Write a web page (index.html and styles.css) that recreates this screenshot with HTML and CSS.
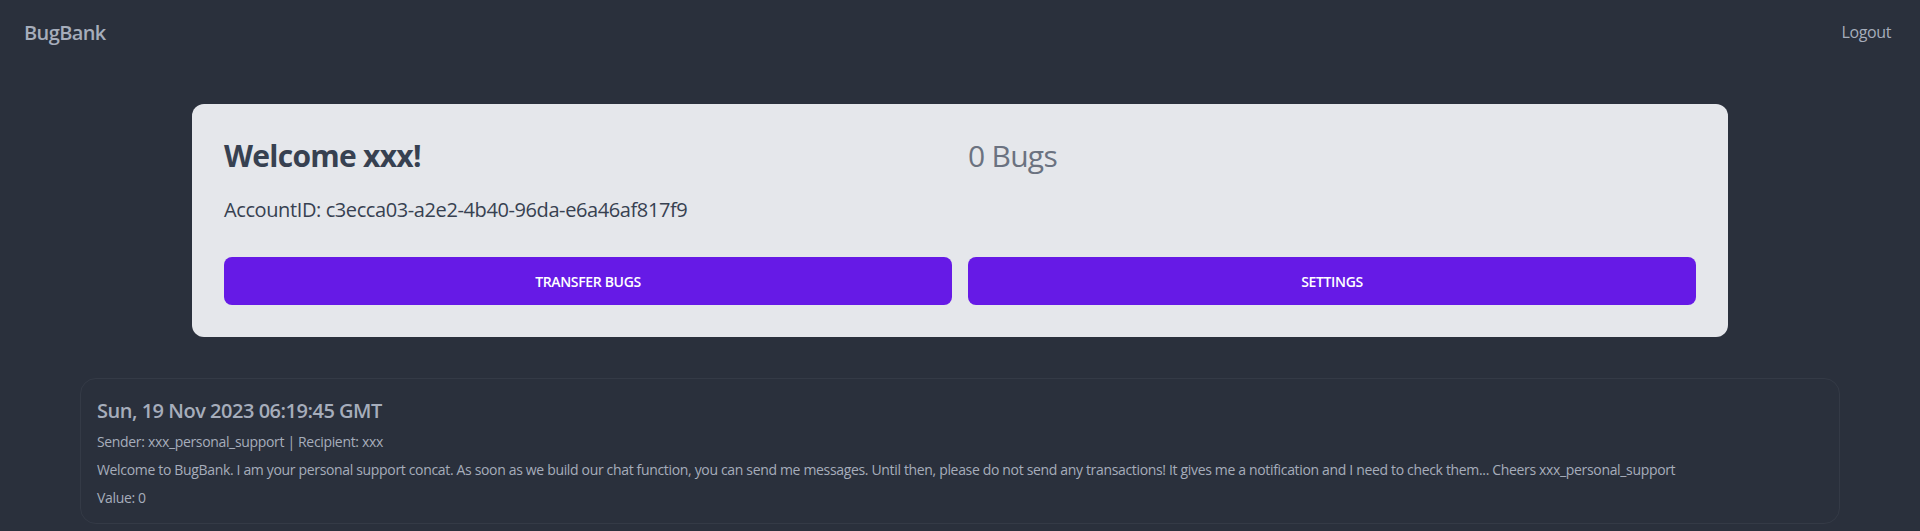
FILE: index.html
```html
<!DOCTYPE html>
<html lang="en">
<head>
<meta charset="utf-8">
<title>BugBank</title>
<link rel="stylesheet" href="styles.css">
</head>
<body>
<nav class="navbar">
  <a class="brand" href="#">BugBank</a>
  <a class="logout" href="#">Logout</a>
</nav>
<main>
  <section class="account-card">
    <div class="account-grid">
      <h1 class="welcome">Welcome xxx!</h1>
      <div class="balance">0 Bugs</div>
      <p class="account-id">AccountID: c3ecca03-a2e2-4b40-96da-e6a46af817f9</p>
    </div>
    <div class="actions">
      <button class="btn" type="button">Transfer Bugs</button>
      <button class="btn" type="button">Settings</button>
    </div>
  </section>
  <section class="messages">
    <article class="message">
      <h2 class="message-date">Sun, 19 Nov 2023 06:19:45 GMT</h2>
      <p class="message-line">Sender: xxx_personal_support | Recipient: xxx</p>
      <p class="message-line">Welcome to BugBank. I am your personal support concat. As soon as we build our chat function, you can send me messages. Until then, please do not send any transactions! It gives me a notification and I need to check them... Cheers xxx_personal_support</p>
      <p class="message-line">Value: 0</p>
    </article>
  </section>
</main>
</body>
</html>
```
FILE: styles.css
```css
* {
  box-sizing: border-box;
}

html, body {
  margin: 0;
  padding: 0;
}

body {
  background: #2a303c;
  font-family: "Open Sans", "Noto Sans", sans-serif;
  color: #a6adbb;
}

a {
  text-decoration: none;
  color: inherit;
}

.navbar {
  display: flex;
  align-items: center;
  justify-content: space-between;
  min-height: 64px;
  padding: 8px;
}

.brand {
  display: flex;
  align-items: center;
  height: 48px;
  padding: 0 16px;
  font-size: 20px;
  font-weight: 600;
  letter-spacing: -0.03em;
  color: #a6adbb;
}

.logout {
  display: flex;
  align-items: center;
  height: 48px;
  padding: 0 21px 0 16px;
  font-size: 16px;
  letter-spacing: -0.024em;
  color: #a6adbb;
}

.account-card {
  width: 1536px;
  margin: 40px auto 0;
  padding: 34px 32px 32px;
  background: #e5e7eb;
  border-radius: 12px;
}

.account-grid {
  display: grid;
  grid-template-columns: 1fr 1fr;
  column-gap: 16px;
}

.welcome {
  margin: 0;
  font-size: 30px;
  line-height: 36px;
  font-weight: 700;
  letter-spacing: -0.024em;
  color: #374151;
}

.balance {
  font-size: 30px;
  line-height: 36px;
  letter-spacing: -0.024em;
  color: #6b7280;
}

.account-id {
  grid-column: 1 / -1;
  margin: 22px 0 0;
  font-size: 20px;
  line-height: 28px;
  letter-spacing: -0.02em;
  color: #374151;
}

.actions {
  display: grid;
  grid-template-columns: 1fr 1fr;
  column-gap: 16px;
  margin-top: 33px;
}

.btn {
  height: 48px;
  border: none;
  border-radius: 8px;
  background: #661ae6;
  color: #ffffff;
  font-family: inherit;
  font-size: 14px;
  font-weight: 600;
  letter-spacing: -0.024em;
  text-transform: uppercase;
}

.messages {
  margin: 41px 80px 0;
}

.message {
  display: flex;
  flex-direction: column;
  gap: 8px;
  padding: 17px 16px 15px;
  border: 1px solid #343a46;
  border-radius: 16px;
}

.message-date {
  margin: 1px 0 -1px;
  font-size: 20px;
  line-height: 28px;
  font-weight: 600;
  letter-spacing: -0.024em;
  color: #a6adbb;
}

.message-line {
  margin: 0;
  font-size: 14px;
  line-height: 20px;
  letter-spacing: -0.024em;
  color: #a6adbb;
}
```
